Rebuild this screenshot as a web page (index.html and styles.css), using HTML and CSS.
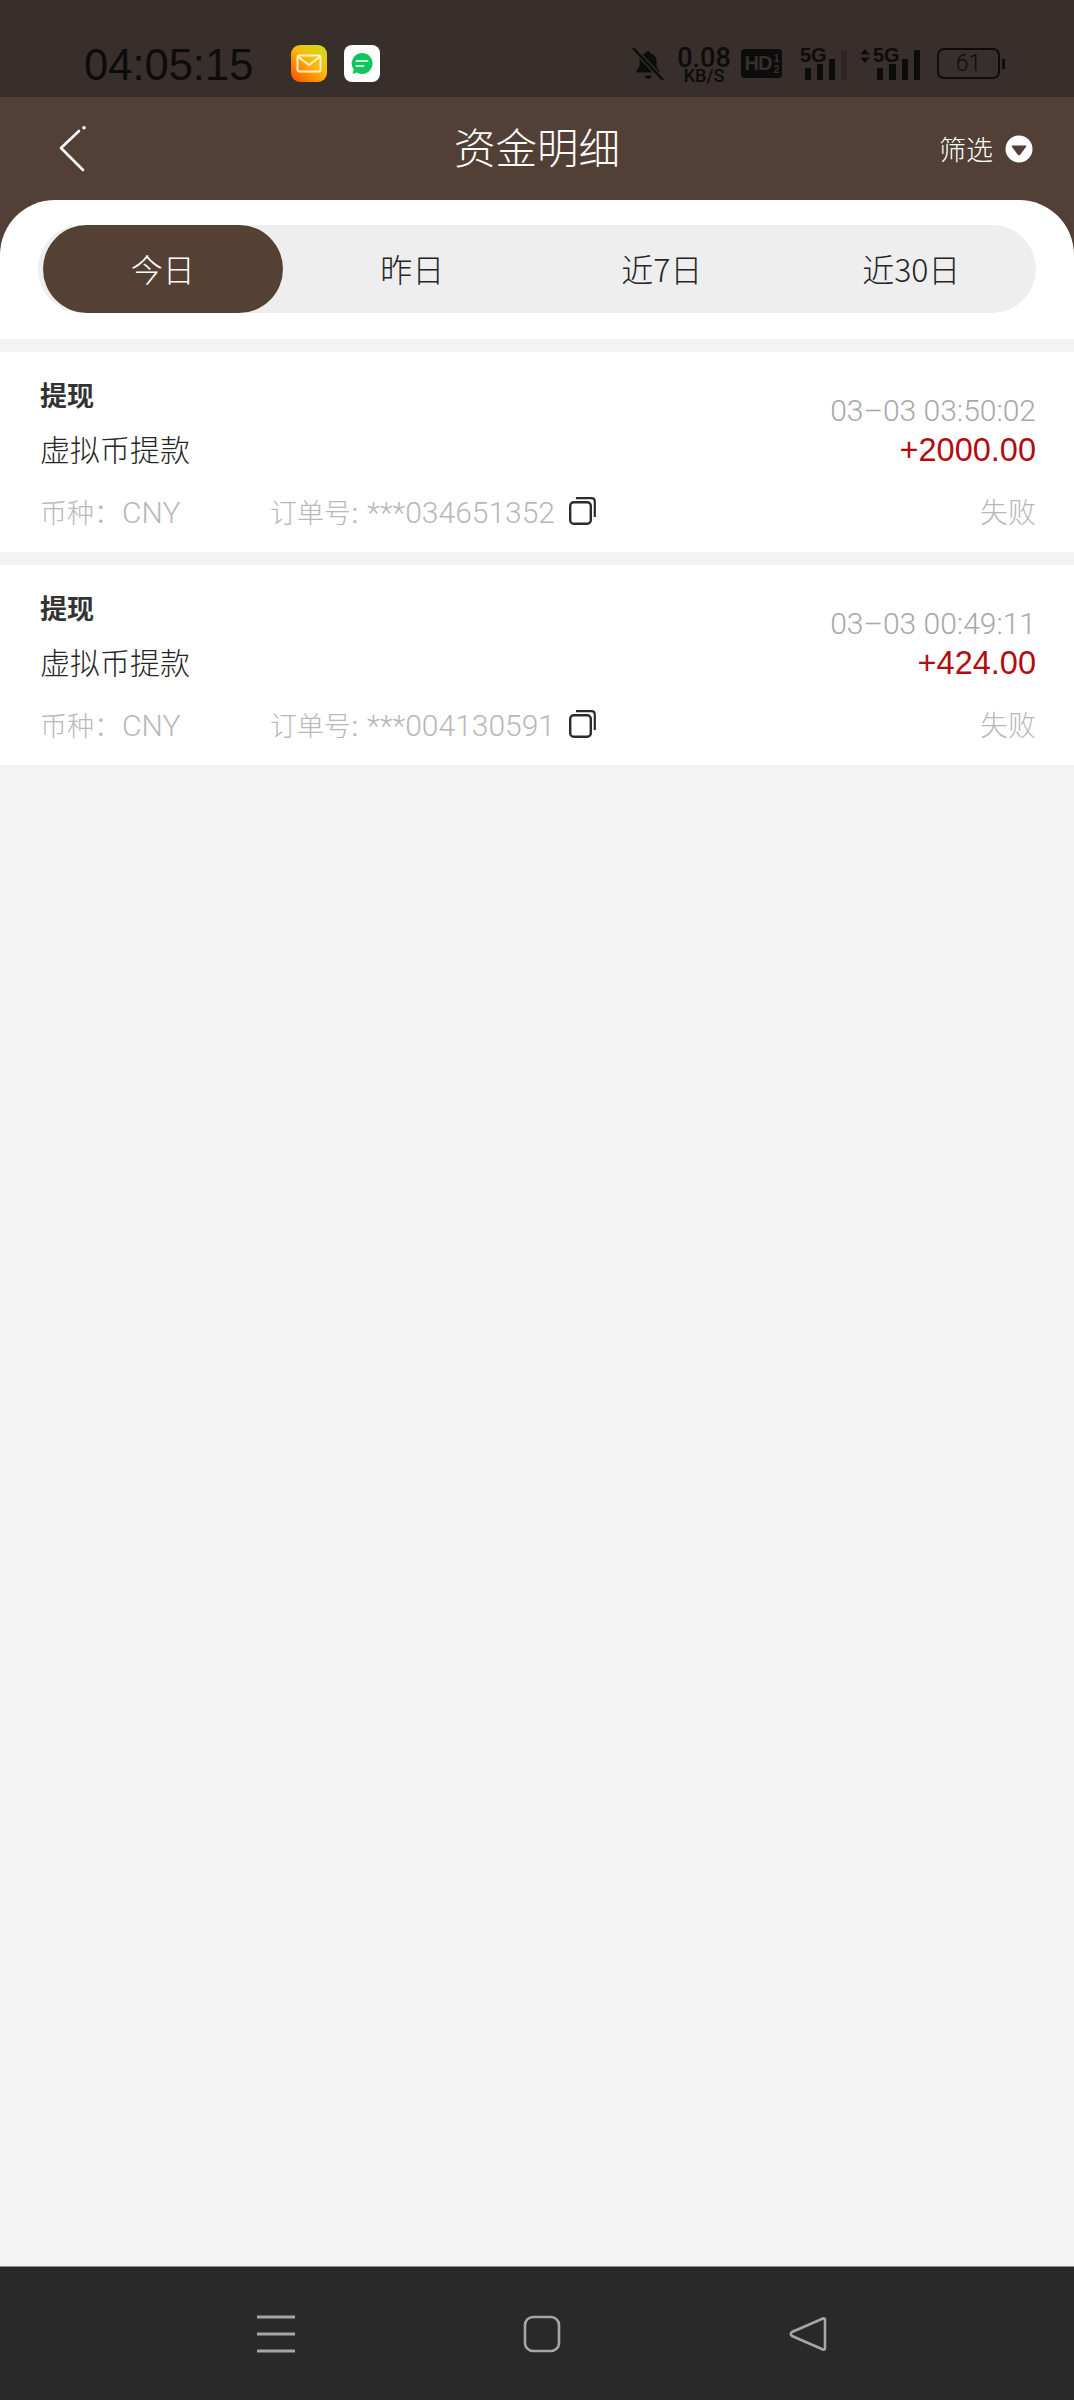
FILE: index.html
```html
<!DOCTYPE html>
<html lang="zh">
<head>
    <meta charset="utf-8">
    <meta name="viewport" content="width=device-width">
    <title>资金明细</title>
    <link rel="stylesheet" href="styles.css">
</head>
<body>
    <div class="page">
        <!-- system status bar -->
        <div class="status">
            <span class="clock">04:05:15</span>
            <svg class="app-icon" width="37" height="37" viewBox="0 0 37 37">
                <defs>
                    <linearGradient id="mailbg" x1="1" y1="0" x2="0.2" y2="1">
                        <stop offset="0" stop-color="#c8e21c"/>
                        <stop offset="0.5" stop-color="#fdb90c"/>
                        <stop offset="1" stop-color="#fb5c00"/>
                    </linearGradient>
                </defs>
                <rect width="36" height="37" rx="9" fill="url(#mailbg)"/>
                <rect x="6.5" y="10.5" width="23" height="16" rx="2" fill="none" stroke="#fff3c4" stroke-width="2"/>
                <path d="M7.5 12l10.5 8 10.5-8" fill="none" stroke="#fff3c4" stroke-width="2"/>
            </svg>
            <svg class="app-icon chat-icon" width="37" height="37" viewBox="0 0 37 37">
                <rect width="36" height="37" rx="8" fill="#fff"/>
                <path d="M18 8a10.5 10.5 0 1 1-5.2 19.6L8.500 29l1.300-4.300A10.500 10.500 0 0 1 18 8z" fill="#12c45d"/>
                <path d="M12.500 16h11M12.500 21h7" stroke="#c9f5da" stroke-width="1.800" fill="none" stroke-linecap="round"/>
            </svg>
            <div class="sys-icons">
                <svg width="34" height="34" viewBox="0 0 34 34">
                    <path d="M17 4c1.400 0 2.300 1 2.400 2.200 4 1 6.100 4.100 6.100 8.300v5l3 4.500v1.500H5.500V24l3-4.500v-5c0-4.200 2.100-7.300 6.100-8.300C14.700 5 15.600 4 17 4z" fill="#0c0c0c"/>
                    <path d="M13.500 28.500h7a3.500 3 0 0 1-7 0z" fill="#0c0c0c"/>
                    <path d="M2 1l30 32" stroke="#382e2c" stroke-width="5"/>
                    <path d="M2 1l30 32" stroke="#0c0c0c" stroke-width="2.500"/>
                </svg>
                <div class="speed">
                    <span class="speed-num">0.08</span>
                    <span class="speed-unit">KB/S</span>
                </div>
                <div class="hd">HD<span class="hd-frac"><i>1</i><i>2</i></span></div>
                <div class="signal sim1">
                    <span class="net">5G</span>
                    <svg width="42" height="30" viewBox="0 0 42 30">
                        <rect x="0" y="18" width="6" height="12" fill="#0c0c0c"/>
                        <rect x="12" y="14" width="6" height="16" fill="#0c0c0c"/>
                        <rect x="24" y="9" width="6" height="21" fill="#0c0c0c"/>
                        <rect x="36" y="0" width="6" height="30" fill="#2d2523"/>
                    </svg>
                </div>
                <div class="signal sim2">
                    <svg class="updown" width="10" height="14" viewBox="0 0 10 14">
                        <path d="M5 0l4.500 5.500H.5zM5 14L.5 8.500h9z" fill="#0c0c0c"/>
                    </svg>
                    <span class="net">5G</span>
                    <svg width="43" height="30" viewBox="0 0 43 30">
                        <rect x="0" y="18" width="6" height="12" fill="#0c0c0c"/>
                        <rect x="12" y="14" width="7" height="16" fill="#0c0c0c"/>
                        <rect x="25" y="9" width="6" height="21" fill="#0c0c0c"/>
                        <rect x="37" y="0" width="6" height="30" fill="#0c0c0c"/>
                    </svg>
                </div>
                <div class="battery">
                    <span class="battery-body">61</span>
                    <span class="battery-tip"></span>
                </div>
            </div>
        </div>

        <div class="header">
            <svg class="back" width="30" height="46" viewBox="0 0 30 46">
                <path d="M25 44L3 22 21 5" fill="none" stroke="#fff" stroke-width="2.600" stroke-linecap="round" stroke-linejoin="round"/>
                <circle cx="26" cy="1.800" r="1.800" fill="#fff"/>
            </svg>
            <h1 class="title">资金明细</h1>
            <div class="filter">
                <span>筛选</span>
                <svg width="28" height="28" viewBox="0 0 28 28">
                    <circle cx="14" cy="14" r="13.500" fill="#fff"/>
                    <path d="M7.500 10.500h13q1.200 0 .6 1.200l-5.900 8q-1.200 1.200-2.400 0l-5.900-8q-.6-1.200.6-1.200z" fill="#524036"/>
                </svg>
            </div>
        </div>

        <div class="panel-wrap">
            <div class="panel">
                <div class="tabs">
                    <div class="tab active">今日</div>
                    <div class="tab">昨日</div>
                    <div class="tab">近7日</div>
                    <div class="tab">近30日</div>
                </div>
            </div>
        </div>

        <div class="list">
            <div class="item">
                <div class="item-top">
                    <div class="item-left">
                        <div class="item-type">提现</div>
                        <div class="item-name">虚拟币提款</div>
                    </div>
                    <div class="item-right">
                        <div class="item-date">03–03 03:50:02</div>
                        <div class="item-amount">+2000.00</div>
                    </div>
                </div>
                <div class="item-bottom">
                    <span class="currency">币种：<span class="latin">CNY</span></span>
                    <span class="order">订单号: <span class="latin">***034651352</span></span>
                    <svg class="copy" width="27" height="28" viewBox="0 0 27 28">
                        <rect x="1.200" y="5.200" width="20.600" height="21.600" rx="3.500" fill="none" stroke="#2c2c2c" stroke-width="2.400"/>
                        <path d="M7 1.200h15.500q3.300 0 3.300 3.300V20" fill="none" stroke="#2c2c2c" stroke-width="2.200"/>
                    </svg>
                    <span class="state">失败</span>
                </div>
            </div>
            <div class="item">
                <div class="item-top">
                    <div class="item-left">
                        <div class="item-type">提现</div>
                        <div class="item-name">虚拟币提款</div>
                    </div>
                    <div class="item-right">
                        <div class="item-date">03–03 00:49:11</div>
                        <div class="item-amount">+424.00</div>
                    </div>
                </div>
                <div class="item-bottom">
                    <span class="currency">币种：<span class="latin">CNY</span></span>
                    <span class="order">订单号: <span class="latin">***004130591</span></span>
                    <svg class="copy" width="27" height="28" viewBox="0 0 27 28">
                        <rect x="1.200" y="5.200" width="20.600" height="21.600" rx="3.500" fill="none" stroke="#2c2c2c" stroke-width="2.400"/>
                        <path d="M7 1.200h15.500q3.300 0 3.300 3.300V20" fill="none" stroke="#2c2c2c" stroke-width="2.200"/>
                    </svg>
                    <span class="state">失败</span>
                </div>
            </div>
        </div>

        <!-- android nav buttons -->
        <div class="navbar">
            <svg width="38" height="38" viewBox="0 0 38 38">
                <path d="M0 2h38M0 19h38M0 36h38" stroke="#a6a6a6" stroke-width="3"/>
            </svg>
            <svg width="38" height="38" viewBox="0 0 38 38">
                <rect x="2" y="2" width="34" height="34" rx="8" fill="none" stroke="#a6a6a6" stroke-width="2.600"/>
            </svg>
            <svg width="38" height="38" viewBox="0 0 38 38">
                <path d="M34 3.500q2-.8 2 1.500v28q0 2.300-2 1.500L3 21q-2.500-2 0-4z" fill="none" stroke="#a6a6a6" stroke-width="2.600" stroke-linejoin="round"/>
            </svg>
        </div>
    </div>
</body>
</html>
```

FILE: styles.css
```css
* {
    margin: 0;
    padding: 0;
    box-sizing: border-box;
}

html, body {
    height: 100%;
    overflow: hidden;
    background-color: #f3f3f3;
}

body {
    font-family: "Noto Sans CJK SC", "Liberation Sans", sans-serif;
    font-weight: 300;
}

.page {
    display: flex;
    flex-direction: column;
    height: 2400px;
}

/* status bar */
.status {
    display: flex;
    align-items: center;
    height: 97px;
    padding: 30px 0 0 84px;
    background-color: #382e2c;
    color: #0c0c0c;
}

.clock {
    width: 207px;
    padding-top: 3px;
    font-family: "Liberation Sans", sans-serif;
    font-weight: 400;
    font-size: 43.500px;
    white-space: nowrap;
}

.chat-icon {
    margin-left: 16px;
}

.sys-icons {
    display: flex;
    align-items: center;
    margin-left: auto;
    padding-right: 69px;
}

.speed {
    display: flex;
    flex-direction: column;
    align-items: center;
    width: 50px;
    margin: 4px 0 0 14px;
    font-family: "Roboto", "Liberation Sans", sans-serif;
    font-weight: 500;
}

.speed-num {
    font-size: 27px;
    line-height: 20px;
}

.speed-unit {
    font-size: 18px;
    line-height: 16px;
    white-space: nowrap;
}

.hd {
    display: flex;
    align-items: center;
    justify-content: center;
    width: 41px;
    height: 29px;
    margin-left: 12px;
    border-radius: 4px;
    background-color: #0c0c0c;
    color: #382e2c;
    font-family: "Liberation Sans", sans-serif;
    font-weight: 700;
    font-size: 20px;
    letter-spacing: -1px;
}

.hd-frac {
    display: flex;
    flex-direction: column;
    margin-left: 2px;
    font-size: 11px;
    line-height: 11px;
}

.hd-frac i {
    font-style: normal;
}

.signal {
    position: relative;
    display: flex;
    align-items: flex-end;
    justify-content: flex-end;
    height: 32px;
}

.sim1 {
    width: 47px;
    margin-left: 18px;
}

.sim2 {
    width: 60px;
    margin-left: 13px;
}

.net {
    position: absolute;
    top: -4px;
    left: 0;
    font-family: "Liberation Sans Narrow", "Liberation Sans", sans-serif;
    font-weight: 700;
    font-size: 20px;
    line-height: 22px;
}

.sim2 .net {
    left: 13px;
}

.updown {
    position: absolute;
    top: 1px;
    left: 0;
}

.battery {
    display: flex;
    align-items: center;
    margin-left: 17px;
}

.battery-body {
    width: 63px;
    height: 31px;
    border: 2px solid #0c0c0c;
    border-radius: 7px;
    text-align: center;
    font-family: "Roboto", "Liberation Sans", sans-serif;
    font-weight: 300;
    font-size: 23px;
    line-height: 27px;
}

.battery-tip {
    width: 3px;
    height: 10px;
    margin-left: 2px;
    background-color: #0c0c0c;
}

/* header */
.header {
    position: relative;
    display: flex;
    align-items: center;
    justify-content: space-between;
    height: 103px;
    padding: 0 41px 0 58px;
    background-color: #524036;
    color: #fff;
}

.title {
    position: absolute;
    left: 0;
    right: 0;
    top: 21px;
    text-align: center;
    font-weight: 300;
    font-size: 41.500px;
    line-height: 56px;
    pointer-events: none;
}

.filter {
    display: flex;
    align-items: center;
    gap: 12px;
    font-size: 27px;
}

.panel-wrap {
    background-color: #524036;
}

.panel {
    height: 139px;
    padding: 25px 38px 0;
    background-color: #fff;
    border-radius: 55px 55px 0 0;
}

.tabs {
    display: grid;
    grid-template-columns: repeat(4, 1fr);
    height: 88px;
    border-radius: 44px;
    background-color: #eeeeee;
}

.tab {
    display: flex;
    align-items: center;
    justify-content: center;
    padding-bottom: 2px;
    font-size: 32px;
    color: #262626;
}

.tab.active {
    margin: 0 5px;
    border-radius: 44px;
    background-color: #554133;
    color: #fff;
}

/* records */
.list {
    flex: 1;
    display: flex;
    flex-direction: column;
    gap: 13px;
    padding-top: 13px;
    background-color: #f3f3f3;
}

.item {
    height: 200px;
    padding: 25px 38px 0 40px;
    background-color: #fff;
}

.item-top {
    display: flex;
    justify-content: space-between;
}

.item-type {
    font-weight: 700;
    font-size: 27px;
    line-height: 36px;
    color: #333333;
}

.item-name {
    margin-top: 17px;
    font-size: 30px;
    line-height: 36px;
    color: #262626;
}

.item-right {
    display: flex;
    flex-direction: column;
    align-items: flex-end;
    padding-top: 16px;
}

.item-date {
    font-family: "Roboto", "Liberation Sans", sans-serif;
    font-weight: 300;
    font-size: 30px;
    line-height: 36px;
    color: #a8a8a8;
}

.item-amount {
    margin-top: 3px;
    font-family: "Liberation Sans", sans-serif;
    font-weight: 400;
    font-size: 32.500px;
    line-height: 36px;
    color: #b30c0f;
}

.item-bottom {
    display: flex;
    align-items: center;
    margin-top: 25px;
    height: 36px;
    font-size: 27px;
    color: #b8b8b8;
}

.currency {
    width: 230px;
}

.order {
    font-family: "Liberation Sans", "Noto Sans CJK SC", sans-serif;
}

.latin {
    margin-left: 1px;
    font-family: "Roboto", sans-serif;
    font-weight: 300;
    font-size: 30px;
}

.copy {
    margin-left: 14px;
}

.state {
    margin-left: auto;
    font-size: 28px;
}

/* nav */
.navbar {
    display: flex;
    align-items: center;
    justify-content: space-between;
    height: 134px;
    padding: 0 247px 0 257px;
    border-top: 1px solid #8f8f8f;
    background-color: #292929;
}
```
